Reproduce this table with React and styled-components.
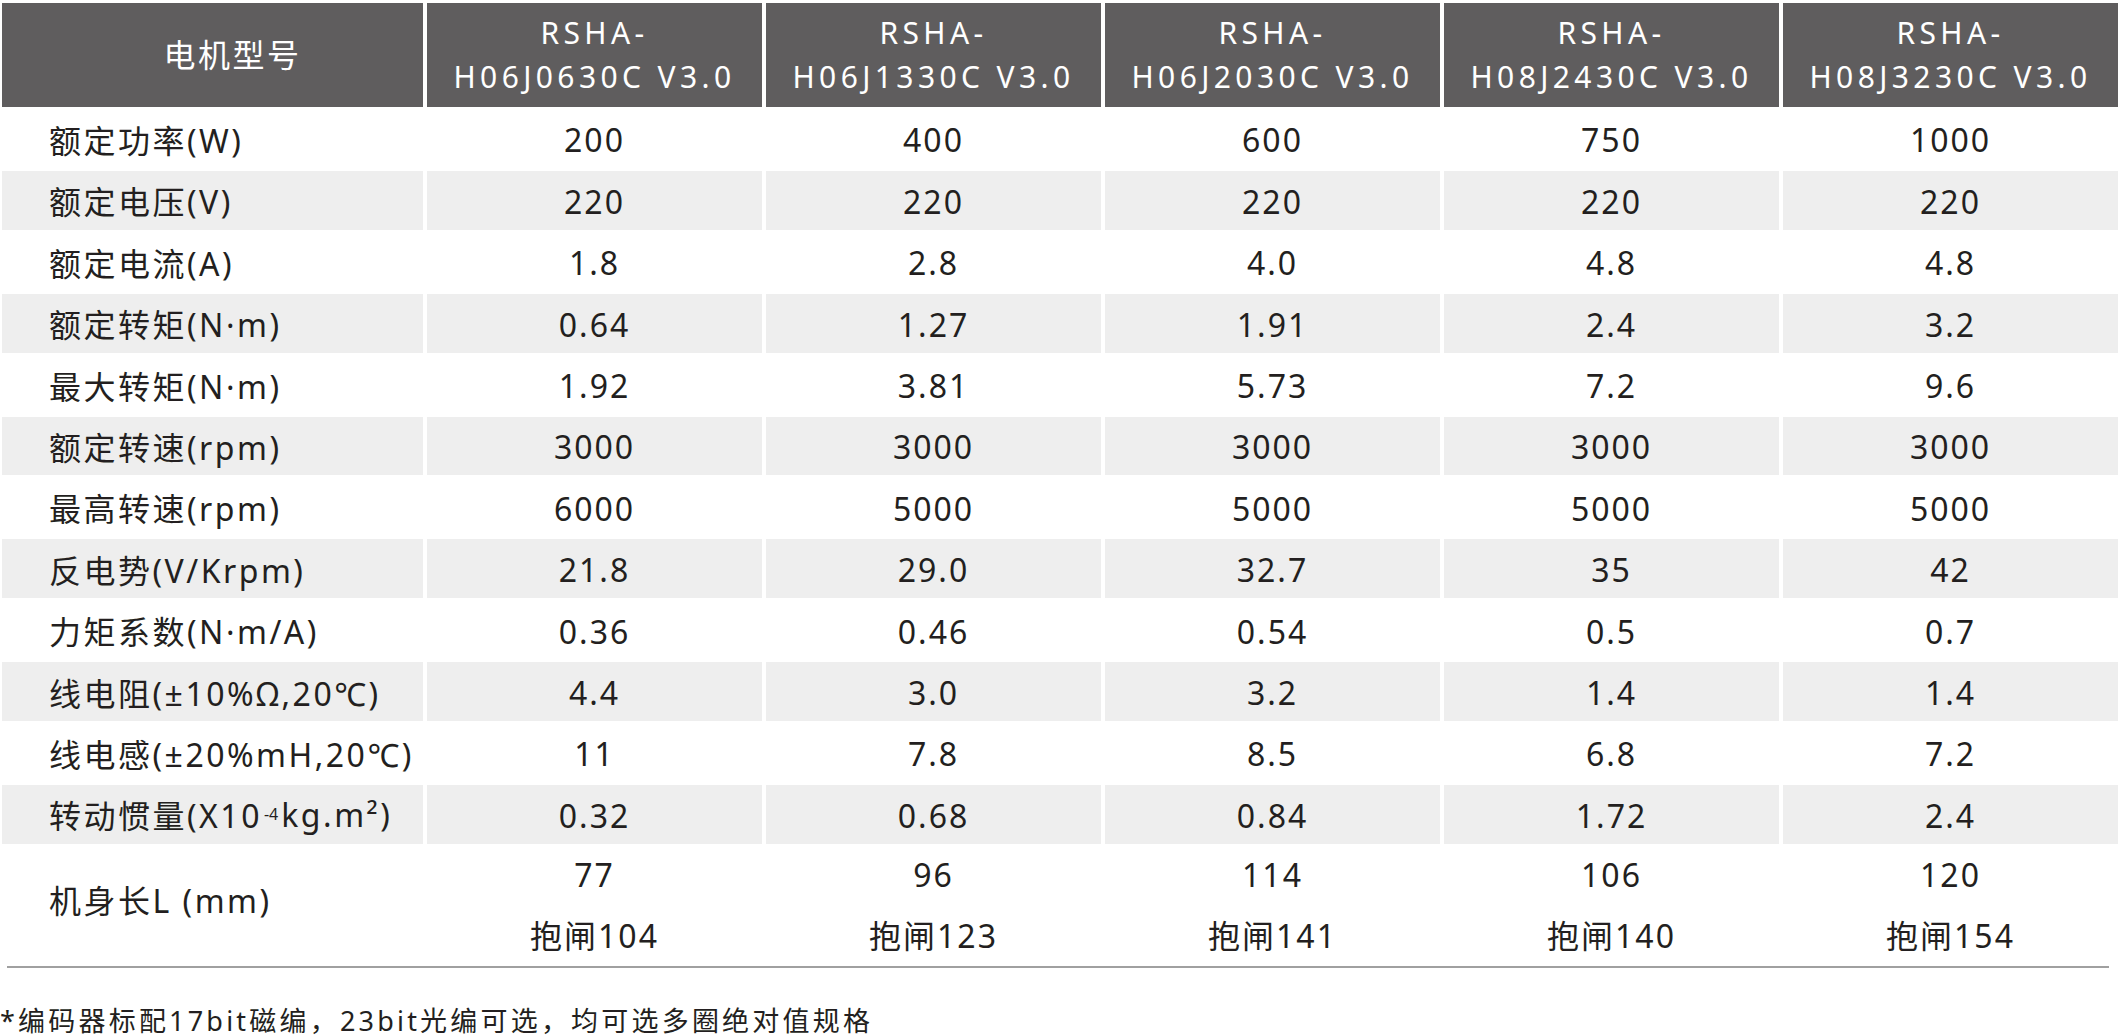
import React from "react";
import styled, { createGlobalStyle } from "styled-components";

const GlobalStyle = createGlobalStyle`
  body {
    margin: 0;
    background: #ffffff;
    font-family: "Noto Sans", "Noto Sans CJK SC", sans-serif;
    color: #231f20;
  }
`;

const models = [
  "H06J0630C V3.0",
  "H06J1330C V3.0",
  "H06J2030C V3.0",
  "H08J2430C V3.0",
  "H08J3230C V3.0",
];

const SupText = styled.sup`
  font-size: 16px;
  vertical-align: 19px;
  line-height: 0;
  letter-spacing: 0;
  margin: 0 3px 0 2px;
`;

const rows = [
  { label: "额定功率(W)", values: ["200", "400", "600", "750", "1000"] },
  { label: "额定电压(V)", values: ["220", "220", "220", "220", "220"] },
  { label: "额定电流(A)", values: ["1.8", "2.8", "4.0", "4.8", "4.8"] },
  { label: "额定转矩(N·m)", values: ["0.64", "1.27", "1.91", "2.4", "3.2"] },
  { label: "最大转矩(N·m)", values: ["1.92", "3.81", "5.73", "7.2", "9.6"] },
  { label: "额定转速(rpm)", values: ["3000", "3000", "3000", "3000", "3000"] },
  { label: "最高转速(rpm)", values: ["6000", "5000", "5000", "5000", "5000"] },
  { label: "反电势(V/Krpm)", values: ["21.8", "29.0", "32.7", "35", "42"] },
  { label: "力矩系数(N·m/A)", values: ["0.36", "0.46", "0.54", "0.5", "0.7"] },
  { label: "线电阻(±10%Ω,20℃)", values: ["4.4", "3.0", "3.2", "1.4", "1.4"] },
  { label: "线电感(±20%mH,20℃)", values: ["11", "7.8", "8.5", "6.8", "7.2"] },
  {
    label: (
      <>
        转动惯量(X10<SupText>-4</SupText>kg.m²)
      </>
    ),
    values: ["0.32", "0.68", "0.84", "1.72", "2.4"],
  },
];

const lengths = [
  ["77", "抱闸104"],
  ["96", "抱闸123"],
  ["114", "抱闸141"],
  ["106", "抱闸140"],
  ["120", "抱闸154"],
];

const Page = styled.div`
  width: 2119px;
  padding: 3px 0 0 2px;
  box-sizing: border-box;
`;

const Table = styled.div`
  display: flex;
  flex-direction: column;
  gap: 2.6px;
  width: 2116px;
`;

const Row = styled.div`
  display: grid;
  grid-template-columns: 421px repeat(5, 1fr);
  grid-template-rows: ${(p) => p.$height}px;
  column-gap: 4px;
  height: ${(p) => p.$height}px;
`;

const HeadCell = styled.div`
  background: #5f5d5e;
  color: #ffffff;
  display: flex;
  align-items: center;
  justify-content: center;
  text-align: center;
  line-height: 44px;
  padding-left: ${(p) => (p.$first ? "40px" : "0")};
  font-size: ${(p) => (p.$first ? "32px" : "30px")};
  letter-spacing: ${(p) => (p.$first ? "2.5px" : "4.4px")};
`;

const Label = styled.div`
  background: ${(p) => (p.$shade ? "#eeeeee" : "#ffffff")};
  display: flex;
  align-items: center;
  padding: 0 0 ${(p) => (p.$tall ? "10px" : "0")} 47px;
  font-size: 32px;
  letter-spacing: 2.5px;
  white-space: nowrap;
`;

const Value = styled.div`
  background: ${(p) => (p.$shade ? "#eeeeee" : "#ffffff")};
  display: flex;
  flex-direction: column;
  align-items: center;
  justify-content: center;
  gap: ${(p) => (p.$tall ? "11px" : "0")};
  font-size: 32px;
  letter-spacing: 2px;
  line-height: 50px;
  padding-top: ${(p) => (p.$tall ? "2px" : "3px")};
`;

const Rule = styled.div`
  margin: 4px 0 0 5px;
  width: 2102px;
  height: 2px;
  background: #a0a0a0;
`;

const Note = styled.p`
  margin: 38px 0 0 -2px;
  font-size: 27px;
  line-height: 30px;
  letter-spacing: 3.2px;
  color: #231f20;
`;

export default function App() {
  return (
    <Page>
      <GlobalStyle />
      <Table>
        <Row $height={104}>
          <HeadCell $first>电机型号</HeadCell>
          {models.map((m) => (
            <HeadCell key={m}>
              RSHA-
              <br />
              {m}
            </HeadCell>
          ))}
        </Row>
        {rows.map((r, i) => (
          <Row key={i} $height={58.8}>
            <Label $shade={i % 2 === 1}>{r.label}</Label>
            {r.values.map((v, j) => (
              <Value key={j} $shade={i % 2 === 1}>
                {v}
              </Value>
            ))}
          </Row>
        ))}
        <Row $height={116}>
          <Label $tall>机身长L (mm)</Label>
          {lengths.map((l, j) => (
            <Value key={j} $tall>
              <span>{l[0]}</span>
              <span>{l[1]}</span>
            </Value>
          ))}
        </Row>
      </Table>
      <Rule />
      <Note>*编码器标配17bit磁编，23bit光编可选，均可选多圈绝对值规格</Note>
    </Page>
  );
}
